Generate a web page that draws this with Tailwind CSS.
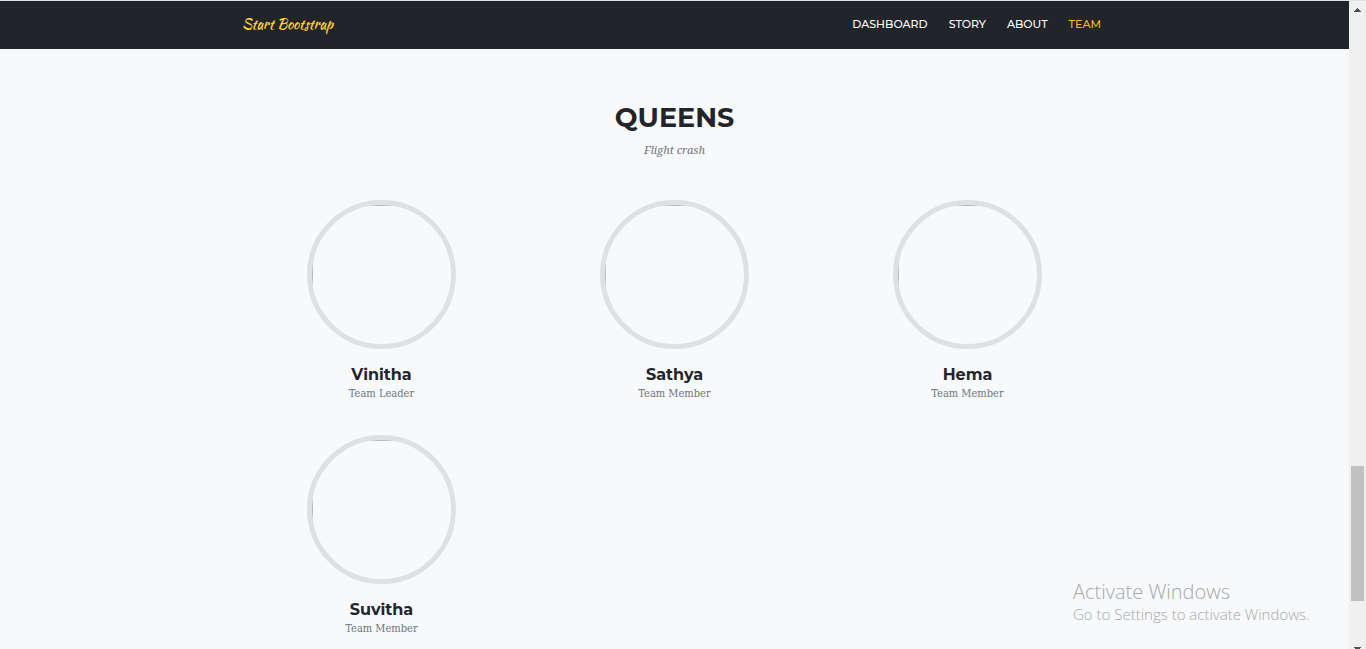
<!DOCTYPE html>
<html lang="en">
<head>
<meta charset="utf-8">
<meta name="viewport" content="width=device-width, initial-scale=1">
<title>Start Bootstrap - Team</title>
<script src="https://cdn.jsdelivr.net/npm/@tailwindcss/browser@4"></script>
</head>
<body class="flex h-screen overflow-hidden bg-[#f8f9fb] font-['Montserrat','Inter',sans-serif] text-[#212529]">
<div class="min-w-0 flex-1 overflow-hidden">
  <header class="border-t border-[#dde5e2] bg-[#212529]">
    <nav class="mx-auto flex h-12 max-w-[879px] items-center justify-between px-[7px]">
      <a href="#top" class="pb-0.5 font-['Kaushan_Script','Liberation_Serif',cursive] text-sm text-[#fed136]">Start Bootstrap</a>
      <ul class="flex gap-[21px] pr-1.5 pb-0.5 text-[11px] font-medium uppercase text-white">
        <li><a href="#dashboard">Dashboard</a></li>
        <li><a href="#story">Story</a></li>
        <li><a href="#about">About</a></li>
        <li><a href="#team" class="text-[#f5b920]">Team</a></li>
      </ul>
    </nav>
  </header>
  <main class="mx-auto max-w-[879px] pt-[49px] text-center">
    <h2 class="text-[27px] leading-10 font-bold uppercase">Queens</h2>
    <p class="mt-1 font-['Roboto_Slab','Noto_Serif','DejaVu_Serif',serif] text-[11px] leading-4 italic text-[#6c757d]">Flight crash</p>
    <ul class="mt-[42px] grid grid-cols-3">
      <li class="flex h-[235px] flex-col items-center">
        <div class="size-[149px] overflow-hidden rounded-full border-[5px] border-[#dfe0e2]"><div class="size-full border-t border-l border-[#b4b5b6]"></div></div>
        <h3 class="mt-4 text-base leading-5 font-bold">Vinitha</h3>
        <p class="font-['Roboto_Slab','DejaVu_Serif_Condensed','DejaVu_Serif',serif] text-[11px] leading-[18px] text-[#6c757d]">Team Leader</p>
      </li>
      <li class="flex h-[235px] flex-col items-center">
        <div class="size-[149px] overflow-hidden rounded-full border-[5px] border-[#dfe0e2]"><div class="size-full border-t border-l border-[#b4b5b6]"></div></div>
        <h3 class="mt-4 text-base leading-5 font-bold">Sathya</h3>
        <p class="font-['Roboto_Slab','DejaVu_Serif_Condensed','DejaVu_Serif',serif] text-[11px] leading-[18px] text-[#6c757d]">Team Member</p>
      </li>
      <li class="flex h-[235px] flex-col items-center">
        <div class="size-[149px] overflow-hidden rounded-full border-[5px] border-[#dfe0e2]"><div class="size-full border-t border-l border-[#b4b5b6]"></div></div>
        <h3 class="mt-4 text-base leading-5 font-bold">Hema</h3>
        <p class="font-['Roboto_Slab','DejaVu_Serif_Condensed','DejaVu_Serif',serif] text-[11px] leading-[18px] text-[#6c757d]">Team Member</p>
      </li>
      <li class="flex h-[235px] flex-col items-center">
        <div class="size-[149px] overflow-hidden rounded-full border-[5px] border-[#dfe0e2]"><div class="size-full border-t border-l border-[#b4b5b6]"></div></div>
        <h3 class="mt-4 text-base leading-5 font-bold">Suvitha</h3>
        <p class="font-['Roboto_Slab','DejaVu_Serif_Condensed','DejaVu_Serif',serif] text-[11px] leading-[18px] text-[#6c757d]">Team Member</p>
      </li>
    </ul>
  </main>
</div>
<div class="flex w-[17px] shrink-0 flex-col items-center border-t border-[#dde5e2] bg-[#f0f0f0]" aria-hidden="true">
  <svg class="mt-[7px] shrink-0" width="7" height="4" shape-rendering="crispEdges" fill="#505050"><path d="M3 0h1v1h1v1h1v1h1v1H0V3h1V2h1V1h1z"/></svg>
  <div class="flex-1"></div>
  <div class="h-[135px] w-[13px] shrink-0 bg-[#c1c1c1]"></div>
  <svg class="mt-[46px] shrink-0" width="7" height="2" shape-rendering="crispEdges" fill="#505050"><path d="M0 0h7v1H6v1H1V1H0z"/></svg>
</div>
<aside class="absolute bottom-6 left-[calc(100%-293px)] font-['Segoe_UI','Open_Sans',sans-serif] font-light whitespace-nowrap text-[#a6a8a9]">
  <p class="text-xl leading-6">Activate Windows</p>
  <p class="text-[15px] leading-[21px]">Go to Settings to activate Windows.</p>
</aside>
</body>
</html>
